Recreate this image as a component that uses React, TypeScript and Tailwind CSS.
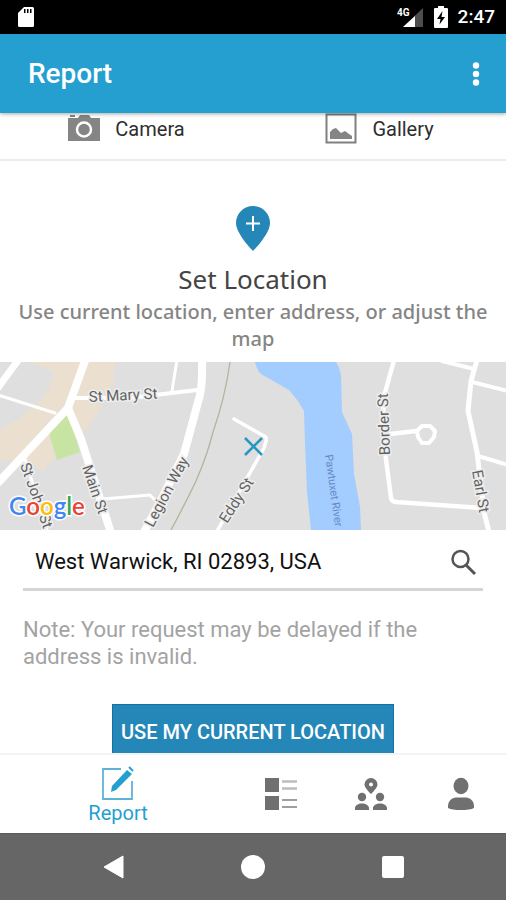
import type { ReactNode } from "react"

function StatusBar() {
  return (
    <div className="flex h-[34px] shrink-0 items-center justify-between bg-black pr-[11px] pl-[18px] text-white">
      <svg width="16" height="22" viewBox="0 0 16 22" aria-hidden="true">
        <path d="M6 1h8.500a1.500 1.500 0 0 1 1.500 1.500v17a1.500 1.500 0 0 1-1.500 1.500h-13A1.500 1.500 0 0 1 0 19.500V7z" fill="#fff" />
        <path d="M6 3h1.500v4H6zM9 3h1.500v4H9zM12 3h1.500v4H12z" fill="#000" />
      </svg>
      <div className="flex items-center gap-2.5">
        <svg width="27" height="22" viewBox="0 0 27 22" aria-hidden="true">
          <path d="M26 2v19H6z" fill="#4d4d4d" />
          <path d="M18 10v11H6z" fill="#fff" />
          <path d="M0 0h13v11H0z" fill="#000" />
          <text x="0" y="10" fontSize="10" fontWeight="700" fill="#fff">4G</text>
        </svg>
        <svg width="14" height="22" viewBox="0 0 14 22" aria-hidden="true">
          <path d="M4 0h6v2h3q1 0 1 1v18q0 1-1 1H1q-1 0-1-1V3q0-1 1-1h3z" fill="#fff" />
          <path d="M8.500 5 3 13h3.500L5.500 18.500 11 11H7.500z" fill="#000" />
        </svg>
        <span className="text-[19px] leading-6 font-medium">2:47</span>
      </div>
    </div>
  )
}

function Header() {
  return (
    <header className="z-10 flex h-[79px] shrink-0 items-center justify-between bg-[#259fcf] pr-4 pl-7 text-white shadow-[0_1px_4px_rgba(0,0,0,0.35)]">
      <h1 className="text-[28px] leading-8 font-medium">Report</h1>
      <button type="button" aria-label="More options" className="flex size-7 items-center justify-center">
        <svg width="8" height="24" viewBox="0 0 8 24" fill="#fff">
          <circle cx="4" cy="3.500" r="3.200" />
          <circle cx="4" cy="12" r="3.200" />
          <circle cx="4" cy="20.500" r="3.200" />
        </svg>
      </button>
    </header>
  )
}

function PhotoSource({ label, children }: { label: string; children: ReactNode }) {
  return (
    <button type="button" className="flex items-center justify-center gap-[15px] text-[20px] leading-8 text-[#2e2e2e]">
      {children}
      {label}
    </button>
  )
}

function PhotoSources() {
  return (
    <div className="grid shrink-0 grid-cols-2 border-b-2 border-[#ececec] pb-[14px]">
      <PhotoSource label="Camera">
        <svg width="32" height="32" viewBox="0 0 32 32" aria-hidden="true">
          <path d="M0 5h10l2-3h9l2 3h9v23H0z" fill="#858585" />
          <path d="M2 2h5v2H2z" fill="#858585" />
          <circle cx="16" cy="16.500" r="7" fill="#858585" stroke="#fff" strokeWidth="2.500" />
        </svg>
      </PhotoSource>
      <PhotoSource label="Gallery">
        <svg width="32" height="32" viewBox="0 0 32 32" aria-hidden="true">
          <path d="M1.500 1.500h29v28h-29z" fill="#fff" stroke="#808080" strokeWidth="2" />
          <path d="M5 26v-7l3-3 3-1 5 5 4-2 4 3 3 2v3z" fill="#858585" />
        </svg>
      </PhotoSource>
    </div>
  )
}

function LocationMap() {
  return (
    <svg viewBox="0 0 506 168" className="block w-full shrink-0" role="img" aria-label="Map of West Warwick">
      <path d="M0 0h506v168H0z" fill="#dfdfdf" />
      <path d="M30 0h85l-2 20-15 30-8 14-12 10-24 23-11 12-18-12L0 99V68l17-10 22-18 11-14 3-16z" fill="#ebdfd0" />
      <path d="M67 50 49 71l8 27 23-8z" fill="#c8e4a3" />
      <path d="M255 0q2 8 6 12l14 8 14 8 9 11 6 10 1 31 2 50 4 38h50l-1-23-6-33-2-40-10-22-1-37q-1-7-5-13z" fill="#a3ccff" />
      <path d="M230 0q-5 36-17 70-6 24-17 49-9 19-25 49" fill="none" stroke="#b6b39b" strokeWidth="1.300" />
      <g fill="none" stroke="#fff" strokeLinejoin="round" strokeLinecap="round">
        <path d="M-4 123 68 46 86-4" strokeWidth="8" />
        <path d="m68 46 13 31 30 94" strokeWidth="8" />
        <path d="M-3 27 19-3" strokeWidth="7" />
        <path d="m-2 33 57 18M177-2l-5 31M103 137l47-4 8 8M25 97l23 74" strokeWidth="3" />
        <path d="M72 36h58l67-8" strokeWidth="4" />
        <path d="M202-4q1 31-4 44l-14 52-24 48-17 32" strokeWidth="8" />
        <path d="m234 57 30 17q3 1 2 5l-2 7-48 85" strokeWidth="3.500" />
        <path d="m394-2-9 33-3 30 4 36 5 39q1 4 5 4l86 6M390 72l26-3" strokeWidth="4.500" />
        <path d="m417 69 5-5 8 0 5 5-1 6-5 6-7 0-4-6z" strokeWidth="4" />
        <path d="m477-2-6 21-3 30 9 41 7 60 5 20" strokeWidth="5" />
        <path d="m442-1 32 8M472 20l36 9M478 94l30 9" strokeWidth="4" />
      </g>
      <g fontSize="15" fill="#626262" stroke="#ededed" strokeWidth="3" paintOrder="stroke">
        <text transform="translate(89 40) rotate(-3)">St Mary St</text>
        <text transform="translate(82 105) rotate(71)">Main St</text>
        <text transform="translate(20 103) rotate(70)">St John St</text>
        <text transform="translate(153 166) rotate(-62)">Legion Way</text>
        <text transform="translate(227 162) rotate(-57)">Eddy St</text>
        <text transform="translate(390 93) rotate(-92)">Border St</text>
        <text transform="translate(472 109) rotate(80)">Earl St</text>
      </g>
      <text transform="translate(325 93) rotate(82)" fontSize="11" fill="#668bc6">Pawtuxet River</text>
      <path d="m245 76 17 17m0-17-17 17" stroke="#2696c4" strokeWidth="2.500" />
      <text x="9" y="153" fontSize="24" fontWeight="600" className="font-['Lato',sans-serif]" stroke="#fff" strokeWidth="3" paintOrder="stroke">
        <tspan fill="#4285f4">G</tspan>
        <tspan fill="#ea4335">o</tspan>
        <tspan fill="#fbbc05">o</tspan>
        <tspan fill="#4285f4">g</tspan>
        <tspan fill="#34a853">l</tspan>
        <tspan fill="#ea4335">e</tspan>
      </text>
    </svg>
  )
}

function AddressForm() {
  return (
    <form className="px-[23px]" onSubmit={(e) => e.preventDefault()}>
      <div className="flex h-[61px] items-center border-b-[3px] border-[#d5d5d5] pt-1.5 pr-1.5 pl-3">
        <input
          type="text"
          aria-label="Address"
          defaultValue="West Warwick, RI 02893, USA"
          className="min-w-0 flex-1 bg-transparent text-[22px] leading-8 text-[#111] outline-none"
        />
        <button type="submit" aria-label="Search">
          <svg width="27" height="28" viewBox="0 0 27 28" fill="none" stroke="#555" strokeWidth="2.500">
            <circle cx="10.500" cy="11" r="8" />
            <path d="m16 17 9 9" strokeWidth="3" />
          </svg>
        </button>
      </div>
      <p className="pt-[25px] text-[22px] leading-[27px] text-[#a3a3a3]">
        Note: Your request may be delayed if the address is invalid.
      </p>
      <button
        type="button"
        className="mx-auto mt-[34px] block h-14 border border-[#1271aa] bg-[#2587b8] px-2 text-[20px] leading-6 font-medium text-white"
      >
        USE MY CURRENT LOCATION
      </button>
    </form>
  )
}

function BottomNav() {
  return (
    <nav className="flex h-20 shrink-0 border-t-2 border-[#f3f3f3] bg-white text-[#707070]">
      <a href="#report" aria-current="page" className="flex flex-1 flex-col items-center pt-2.5 text-[20px] leading-6 text-[#259fcf]">
        <svg width="34" height="36" viewBox="0 0 34 36" aria-hidden="true">
          <path d="M20 4H2v30h29V16" fill="none" stroke="#5fb3d8" strokeWidth="1.800" />
          <path d="m10 27 1-6L26 5l5 4-16 16z" fill="#259fcf" />
          <path d="m28 2 4 4" stroke="#259fcf" strokeWidth="2" />
        </svg>
        Report
      </a>
      <a href="#requests" aria-label="Requests" className="flex w-[90px] items-center justify-center">
        <svg width="34" height="34" viewBox="0 0 34 34" aria-hidden="true">
          <path d="M1 1h14v14H1zM1 19h14v14H1z" fill="#707070" />
          <path d="M18 4.500h15M18 11.500h15" stroke="#bdbdbd" strokeWidth="2.500" />
          <path d="M18 23h15M18 30h15" stroke="#808080" strokeWidth="1.500" />
        </svg>
      </a>
      <a href="#nearby" aria-label="Nearby" className="flex w-[90px] items-center justify-center">
        <svg width="34" height="34" viewBox="0 0 34 34" fill="#707070" aria-hidden="true">
          <path fillRule="evenodd" d="M17 1a6.500 6.500 0 0 1 6.500 6.500C23.500 11 17 17 17 17s-6.500-6-6.500-9.500A6.500 6.500 0 0 1 17 1zm0 4.500a2 2 0 1 0 0 4 2 2 0 1 0 0-4z" />
          <circle cx="8" cy="20" r="4.200" />
          <circle cx="26" cy="20" r="4.200" />
          <path d="M1 33v-2c0-2.500 3.500-4.500 7-4.500s7 2 7 4.500v2zM19 33v-2c0-2.500 3.500-4.500 7-4.500s7 2 7 4.500v2z" />
        </svg>
      </a>
      <a href="#profile" aria-label="Profile" className="flex w-[90px] items-center justify-center">
        <svg width="28" height="34" viewBox="0 0 28 34" fill="#707070" aria-hidden="true">
          <ellipse cx="14" cy="9" rx="7.500" ry="8.300" />
          <path d="M1 31v-2c0-6 5-8.500 9-8.500h8c4 0 9 2.500 9 8.500v2q-4 2-13 2T1 31z" />
        </svg>
      </a>
    </nav>
  )
}

function SystemBar() {
  return (
    <div className="flex h-[67px] shrink-0 items-center justify-center border-t border-[#5a5a5a] bg-[#666]">
      <button type="button" aria-label="Back" className="flex w-[140px] justify-center">
        <svg width="22" height="26" viewBox="0 0 22 26">
          <path d="m2 13 19-11v22z" fill="#fff" stroke="#fff" strokeLinejoin="round" />
        </svg>
      </button>
      <button type="button" aria-label="Home" className="flex w-[140px] justify-center">
        <span className="size-6 rounded-full bg-white" />
      </button>
      <button type="button" aria-label="Overview" className="flex w-[140px] justify-center">
        <span className="size-[22px] rounded-xs bg-white" />
      </button>
    </div>
  )
}

export default function App() {
  return (
    <div className="flex h-screen flex-col overflow-hidden bg-white font-['Roboto',sans-serif]">
      <StatusBar />
      <Header />
      <main className="flex min-h-0 flex-1 flex-col overflow-hidden">
        <PhotoSources />
        <section className="flex shrink-0 flex-col items-center px-4 pt-[44px] pb-2.5 text-center font-['Noto_Sans',sans-serif]">
          <svg width="36" height="46" viewBox="0 0 36 46" aria-hidden="true">
            <path d="M18 1a17 17 0 0 1 17 17c0 11-17 28-17 28S1 29 1 18A17 17 0 0 1 18 1z" fill="#2587b8" />
            <path d="M18 11v15M11 18.500h14" stroke="#fff" strokeWidth="2" />
          </svg>
          <h2 className="mt-3 text-[26px] leading-8 text-[#444]">Set Location</h2>
          <p className="mt-[3px] text-[20px] leading-[27px] font-medium text-[#858585]">
            Use current location, enter address, or adjust the map
          </p>
        </section>
        <LocationMap />
        <AddressForm />
      </main>
      <BottomNav />
      <SystemBar />
    </div>
  )
}
